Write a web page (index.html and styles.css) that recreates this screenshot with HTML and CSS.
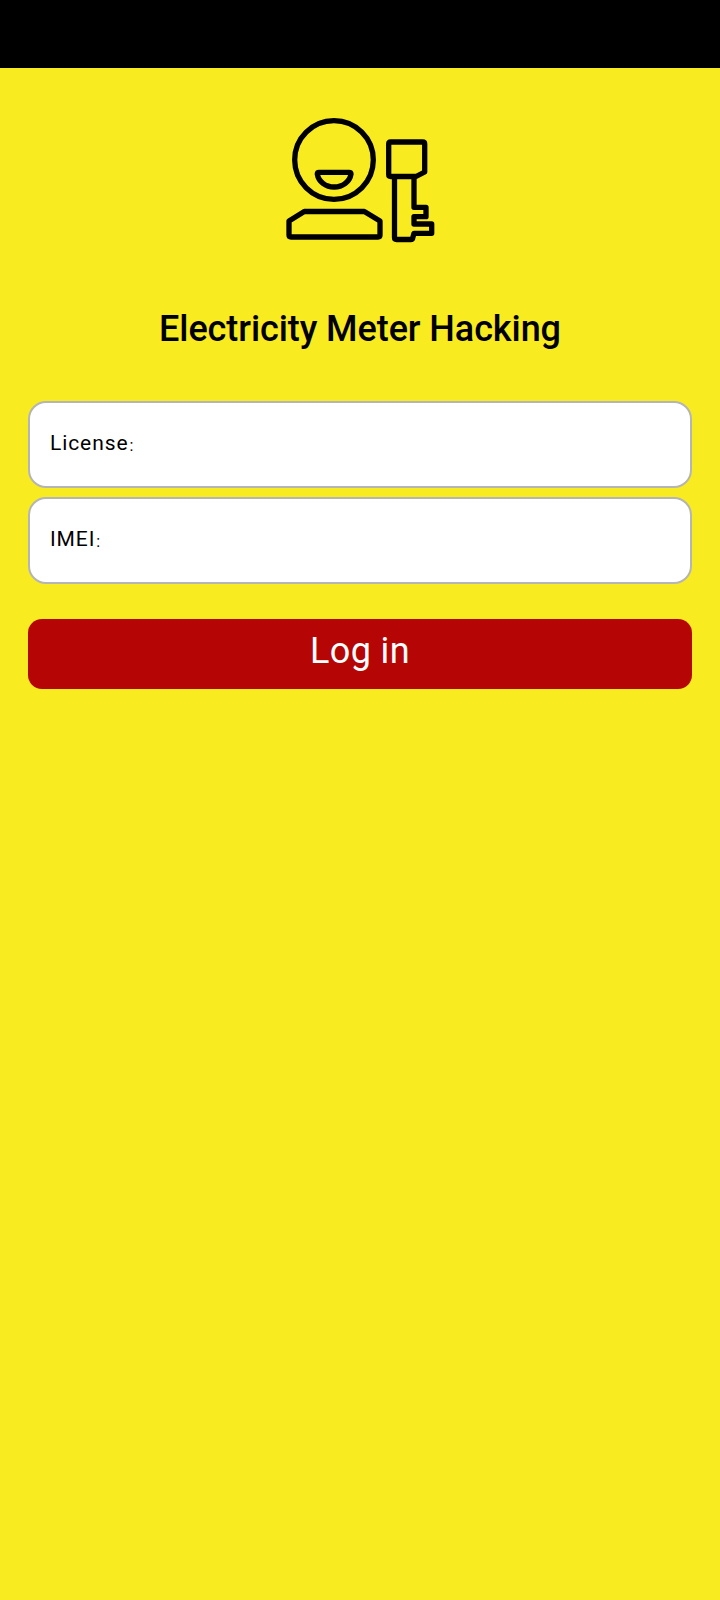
FILE: index.html
```html
<!DOCTYPE html>
<html lang="en">
<head>
<meta charset="UTF-8" />
<meta name="viewport" content="width=device-width, initial-scale=1" />
<title>Electricity Meter Hacking</title>
<link rel="stylesheet" href="styles.css">
</head>
<body>

<div class="status-bar"></div>

<main class="login">
  <!-- logo: person and key -->
  <svg class="logo" xmlns="http://www.w3.org/2000/svg" viewBox="280 112 160 136" width="160" height="136" fill="none" stroke="black" stroke-width="5.3" stroke-linejoin="round" stroke-linecap="round">
    <circle cx="334" cy="160" r="39.3"/>
    <path d="M319 172.3H349Q351 172.3 351 174A17 15 0 0 1 317.3 174Q317.3 172.3 319 172.3Z"/>
    <path d="M291 237H378Q380 237 380 235V221L364.3 211.5H304.3L289 221V235Q289 237 291 237Z"/>
    <path d="M390.7 142H422.7Q424.7 142 424.7 144V172L416 176.5H390.7Q388.7 176.5 388.7 174.5V144Q388.7 142 390.7 142Z"/>
    <path d="M394.5 178V237.5Q394.5 239.5 396.5 239.5H410.7Q412.7 239.5 412.7 238L414 233.3H431.7V224H414V216.7H426V207.3H414V178"/>
  </svg>

  <h1 class="title">Electricity Meter Hacking</h1>

  <div class="fields">
    <div class="field">License<span class="colon">:</span></div>
    <div class="field">IMEI<span class="colon">:</span></div>
  </div>

  <div class="login-button">Log in</div>
</main>

</body>
</html>
```

FILE: styles.css
```css
/* Reset */
* {
  margin: 0; padding: 0; box-sizing: border-box;
}
body, html {
  height: 100%;
  background: #f8eb1f;
  font-family: Roboto, 'Liberation Sans', sans-serif;
  overflow: hidden;
}

.status-bar {
  height: 68px;
  background: black;
}

.login {
  display: flex;
  flex-direction: column;
  align-items: center;
  padding: 44px 28px 0;
}

.logo {
  display: block;
  flex-shrink: 0;
}

.title {
  margin-top: 59px;
  font-size: 36px;
  font-weight: 500;
  letter-spacing: -0.08px;
  line-height: 44px;
  color: black;
}

.fields {
  width: 100%;
  margin-top: 50px;
  display: flex;
  flex-direction: column;
  gap: 9px;
}

.field {
  height: 87px;
  display: flex;
  align-items: center;
  padding: 0 20px 3px;
  background: white;
  border: 2px solid #b5b5b5;
  border-radius: 18px;
  font-size: 21px;
  letter-spacing: 0.9px;
  color: black;
}

.colon {
  font-size: 16px;
  margin: 4px 0 0 1px;
}

.login-button {
  width: 100%;
  height: 70px;
  margin-top: 35px;
  padding-bottom: 6px;
  display: flex;
  align-items: center;
  justify-content: center;
  background: #b50505;
  border-radius: 14px;
  font-size: 36px;
  letter-spacing: 0.35px;
  color: white;
}
```
